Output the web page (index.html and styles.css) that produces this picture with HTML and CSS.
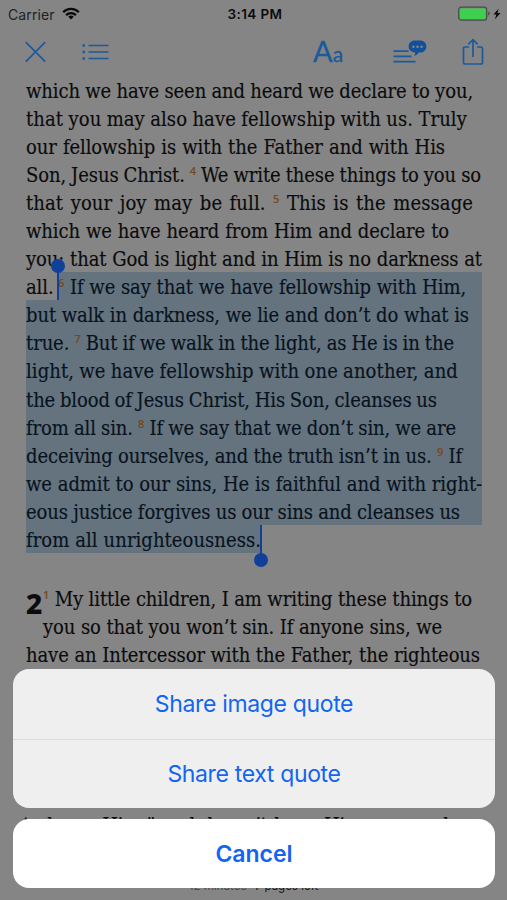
FILE: index.html
```
<!DOCTYPE html>
<html lang="en">
<head>
    <meta charset="UTF-8">
    <meta name="viewport" content="width=device-width, initial-scale=1.0">
    <title>1 John</title>
    <link rel="stylesheet" href="styles.css">
</head>
<body>
    <header class="status-bar">
        <div class="carrier">
            <span>Carrier</span>
            <svg width="18" height="13" viewBox="0 0 18 13" fill="none" stroke="#080808" stroke-width="2.3">
                <path d="M1.2 5.2a11 11 0 0 1 15.6 0"/>
                <path d="M4.1 8.1a7 7 0 0 1 9.8 0"/>
                <path d="M9 12.4 6.3 9.7a3.9 3.9 0 0 1 5.4 0z" fill="#080808" stroke="none"/>
            </svg>
        </div>
        <div class="time">3:14 PM</div>
        <div class="battery">
            <svg width="44" height="16" viewBox="0 0 44 16">
                <rect x=".7" y="1.2" width="28" height="13" rx="2.6" fill="none" stroke="#4b4b4b" stroke-width="1.2"/>
                <rect x="2" y="2.5" width="25.4" height="10.4" rx="1.2" fill="#3ecf4f"/>
                <path d="M30.2 5.6q1.6.6 1.6 2t-1.6 2z" fill="#4b4b4b"/>
                <path d="M40.7 2.8 35.4 8.6h3l-1.5 4.6 5.6-6.2h-3.1z" fill="#080808"/>
            </svg>
        </div>
    </header>

    <nav class="toolbar">
        <svg class="icon-close" width="22" height="22" viewBox="0 0 22 22"><path d="M.8 1.2l19.4 19.4M20.2 1.2.8 20.6"/></svg>
        <svg class="icon-list" width="27" height="18" viewBox="0 0 27 18">
            <path d="M6.5 2.5h20M6.5 9h20M6.5 15.5h20"/>
            <path d="M.5 2.5H3M.5 9H3M.5 15.5H3" stroke-width="2.6"/>
        </svg>
        <div class="icon-font"><span class="big-a">A</span><span class="small-a">a</span></div>
        <svg class="icon-notes" width="34" height="24" viewBox="0 0 34 24">
            <path d="M.5 11.2h15M.5 16.4h18M.5 21.6h22" stroke-width="1.8"/>
            <path d="M22 .5h5c3.7 0 6.4 2.5 6.4 6s-2.7 6.1-6.4 6.1h-1.5c-.8 1.7-2.3 2.9-4.5 3.3.8-1 1.2-2.1 1.1-3.5C18.1 12 15.6 9.9 15.6 6.5 15.6 3 18.3.5 22 .5z" fill="#11509a" stroke="none"/>
            <g fill="#858585" stroke="none"><circle cx="20.4" cy="6.7" r="1.3"/><circle cx="24.5" cy="6.7" r="1.3"/><circle cx="28.6" cy="6.7" r="1.3"/></g>
        </svg>
        <svg class="icon-share" width="22" height="28" viewBox="0 0 22 28">
            <path d="M7 9H3.2Q1.5 9 1.5 10.7v13.6q0 1.7 1.7 1.7h15.6q1.7 0 1.7-1.7V10.7Q20.5 9 18.8 9H15M11 19V1.8M6.3 6.3 11 1.6l4.7 4.7"/>
        </svg>
    </nav>

    <main class="reader">
        <section class="chapter chapter-one">
            <p class="line">which we have seen and heard we declare to you,</p>
            <p class="line loose">that you may also have fellowship with us. Truly</p>
            <p class="line">our fellowship is with the Father and with His</p>
            <p class="line">Son, Jesus Christ. <sup>4</sup> We write these things to you so</p>
            <p class="line loose">that your joy may be full. <sup>5</sup> This is the message</p>
            <p class="line">which we have heard from Him and declare to</p>
            <p class="line">you: that God is light and in Him is no darkness at</p>
            <p class="line selection-start"><span class="word">all.</span><span class="selected"><i class="handle handle-top"></i><sup>6</sup> If we say that we have fellowship with Him,</span></p>
            <p class="line selected">but walk in darkness, we lie and don’t do what is</p>
            <p class="line selected">true. <sup>7</sup> But if we walk in the light, as He is in the</p>
            <p class="line selected loose">light, we have fellowship with one another, and</p>
            <p class="line selected">the blood of Jesus Christ, His Son, cleanses us</p>
            <p class="line selected">from all sin. <sup>8</sup> If we say that we don’t sin, we are</p>
            <p class="line selected">deceiving ourselves, and the truth isn’t in us. <sup>9</sup> If</p>
            <p class="line selected">we admit to our sins, He is faithful and with right-</p>
            <p class="line selected">eous justice forgives us our sins and cleanses us</p>
            <p class="line selected selection-end">from all unrighteousness.<i class="handle handle-bottom"></i></p>
        </section>
        <section class="chapter chapter-two">
            <div class="chapter-opening">
                <span class="chapter-number">2</span>
                <p class="line"><sup>1</sup> My little children, I am writing these things to</p>
                <p class="line">you so that you won’t sin. If anyone sins, we</p>
            </div>
            <p class="line">have an Intercessor with the Father, the righteous</p>
            <p class="line page-end">to know Him,” and doesn’t keep His command-</p>
        </section>
    </main>

    <footer class="progress"><span>12 minutes</span> <b>7 pages left</b></footer>

    <div class="action-sheet">
        <div class="actions">
            <button>Share image quote</button>
            <button>Share text quote</button>
        </div>
        <button class="cancel">Cancel</button>
    </div>
</body>
</html>
```
FILE: styles.css
```
* {
    box-sizing: border-box;
}
body {
    margin: 0;
    height: 900px;
    overflow: hidden;
    position: relative;
    background-color: #858585;
    color: #0b0b0b;
    font-family: Inter, Arial, sans-serif;
}
.status-bar {
    display: grid;
    grid-template-columns: 1fr auto 1fr;
    align-items: center;
    height: 28px;
    padding: 0 5px 0 8px;
    font-size: 14px;
}
.carrier {
    display: flex;
    align-items: center;
    gap: 7px;
    color: #222;
}
.carrier span {
    letter-spacing: 0.1px;
}
.carrier svg {
    margin-top: -2px;
}
.time {
    font-weight: 600;
    font-size: 13.5px;
    letter-spacing: 0.4px;
}
.battery {
    display: flex;
    justify-content: flex-end;
}
.toolbar {
    display: flex;
    align-items: center;
    height: 48px;
    padding-left: 25px;
}
.toolbar svg {
    fill: none;
    stroke: #1b5a9b;
    stroke-width: 1.7;
}
.icon-list {
    margin-left: 35px;
}
.icon-font {
    margin-left: 204px;
    width: 30px;
    white-space: nowrap;
    color: #1b5a9b;
    font-family: Lato, sans-serif;
    line-height: 30px;
    padding-top: 2px;
    -webkit-text-stroke: 0.3px #1b5a9b;
}
.big-a {
    font-size: 29px;
}
.small-a {
    font-size: 21px;
}
.icon-notes {
    margin-left: 50px;
}
.icon-share {
    margin-left: 35px;
}
.reader {
    padding-left: 26px;
    font-family: "DejaVu Serif Condensed", "DejaVu Serif", serif;
    font-stretch: condensed;
    font-size: 20px;
    letter-spacing: -0.1px;
    word-spacing: -4px;
    -webkit-text-stroke: 0.15px;
}
.line {
    margin: 0;
    height: 28.05px;
    line-height: 30px;
    white-space: nowrap;
    text-align-last: justify;
}
.loose {
    letter-spacing: 0.1px;
}
sup {
    font-family: "Noto Sans", sans-serif;
    font-size: 11px;
    font-weight: 500;
    line-height: 0;
    vertical-align: 7px;
    color: #75491f;
}
/* measured line ends of the ragged-right column */
.chapter-one .line:nth-child(1) { width: 447px; }
.chapter-one .line:nth-child(2) { width: 441px; }
.chapter-one .line:nth-child(3) { width: 419px; }
.chapter-one .line:nth-child(4) { width: 455px; }
.chapter-one .line:nth-child(5) { width: 447px; }
.chapter-one .line:nth-child(6) { width: 423px; }
.chapter-one .line:nth-child(7) { width: 456px; }
.chapter-one .line:nth-child(9) { padding-right: 13px; }
.chapter-one .line:nth-child(10) { padding-right: 28px; }
.chapter-one .line:nth-child(11) { padding-right: 24px; }
.chapter-one .line:nth-child(12) { padding-right: 45px; }
.chapter-one .line:nth-child(13) { padding-right: 26px; }
.chapter-one .line:nth-child(14) { padding-right: 20px; }
.chapter-one .line:nth-child(16) { padding-right: 22px; }
.selected {
    width: 456px;
    background-color: #64737e;
    color: #08121d;
}
.selection-start {
    display: flex;
}
.word {
    width: 32px;
    text-align-last: left;
}
.selection-start .selected {
    position: relative;
    width: 424px;
    padding-right: 16px;
}
.line.selection-end {
    position: relative;
    width: 235px;
    letter-spacing: 0.05px;
}
.handle {
    position: absolute;
    width: 2px;
    height: 28px;
    top: 0;
    background-color: #10409a;
}
.handle::before {
    content: "";
    position: absolute;
    left: -6px;
    width: 14px;
    height: 14px;
    border-radius: 50%;
    background-color: #10409a;
}
.handle-top {
    left: -1px;
}
.handle-top::before {
    top: -13px;
}
.handle-bottom {
    right: -1px;
}
.handle-bottom::before {
    bottom: -14px;
}
.chapter-two {
    margin-top: 31.5px;
}
.chapter-opening {
    display: grid;
    grid-template-columns: 17px auto;
}
.chapter-number {
    grid-row: span 2;
    font-family: "Noto Sans", sans-serif;
    font-size: 28px;
    font-weight: 800;
    line-height: 39px;
}
.chapter-opening .line:nth-child(2) { width: 429px; }
.chapter-opening .line:nth-child(3) { width: 399px; }
.chapter-two > .line { width: 454px; }
.chapter-two > .page-end {
    width: 432px;
    margin-top: 142px;
    margin-left: -3px;
}
.progress {
    position: absolute;
    top: 879px;
    width: 100%;
    text-align: center;
    font-size: 11.5px;
    color: #4a4a4a;
}
.progress b {
    margin-left: 5px;
    font-weight: 400;
    color: #161616;
}
.action-sheet {
    position: absolute;
    left: 13px;
    top: 669px;
    width: 482px;
    display: flex;
    flex-direction: column;
    gap: 11px;
}
.actions {
    display: flex;
    flex-direction: column;
    border-radius: 16px;
    overflow: hidden;
    background-color: #efefef;
}
button {
    height: 69.5px;
    border: none;
    padding: 1px 0 0;
    background: none;
    color: #1265f2;
    font-family: Inter, Arial, sans-serif;
    font-size: 23px;
    letter-spacing: -0.35px;
}
.actions button + button {
    border-top: 1px solid #dcdcdc;
}
.cancel {
    height: 69px;
    border-radius: 16px;
    background-color: #fff;
    font-weight: 600;
    letter-spacing: 0;
}
```
